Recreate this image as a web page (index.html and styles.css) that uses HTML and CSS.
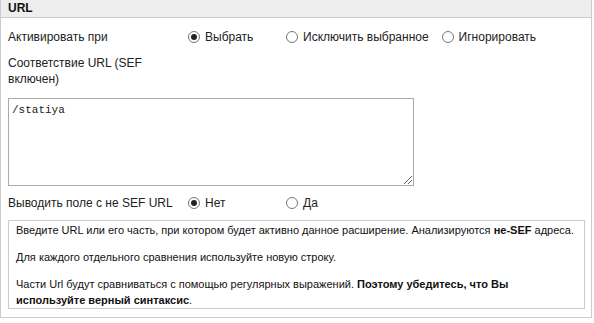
FILE: index.html
```html
<!DOCTYPE html>
<html lang="ru">
  <head>
    <meta charset="UTF-8">
    <title>URL</title>
    <link rel="stylesheet" href="styles.css">
  </head>
  <body>
    <fieldset class="panel">
      <h3 class="panel-title">URL</h3>
      <div class="panel-body">
        <div class="row">
          <span class="label">Активировать при</span>
          <div class="options">
            <label class="opt"><span class="radio checked"></span>Выбрать</label>
            <label class="opt"><span class="radio"></span>Исключить выбранное</label>
            <label class="opt"><span class="radio"></span>Игнорировать</label>
          </div>
        </div>
        <div class="row">
          <span class="label">Соответствие URL (SEF включен)</span>
        </div>
        <div class="area">/statiya<span class="grip"></span></div>
        <div class="row">
          <span class="label">Выводить поле с не SEF URL</span>
          <div class="options">
            <label class="opt"><span class="radio checked"></span>Нет</label>
            <label class="opt"><span class="radio"></span>Да</label>
          </div>
        </div>
        <div class="info">
          <p>Введите URL или его часть, при котором будет активно данное расширение. Анализируются <b>не-SEF</b> адреса.</p>
          <p>Для каждого отдельного сравнения используйте новую строку.</p>
          <p>Части Url будут сравниваться с помощью регулярных выражений. <b>Поэтому убедитесь, что Вы используйте верный синтаксис</b>.</p>
        </div>
      </div>
    </fieldset>
  </body>
</html>
```
FILE: styles.css
```css
html, body {
  margin: 0;
  background-color: white;
}
body {
  font-family: "Liberation Sans", Arial, sans-serif;
  font-size: 12px;
  color: #222;
}
.panel {
  margin: 0;
  padding: 0;
  width: 592px;
  height: 318px;
  box-sizing: border-box;
  border: 1px solid #ccc;
  border-top: none;
}
.panel-title {
  margin: 0;
  padding: 2px 7px;
  height: 13px;
  line-height: 13px;
  font-size: 12px;
  background-color: #eee;
  border-bottom: 1px solid #ccc;
  color: #111;
}
.panel-body {
  padding: 11px 6px 0 7px;
}
.row {
  display: flex;
  align-items: center;
  min-height: 16px;
}
.label {
  width: 172px;
  flex-shrink: 0;
  line-height: 16px;
}
.options {
  display: flex;
  margin-left: 8px;
}
.opt {
  display: inline-flex;
  align-items: center;
  min-width: 98px;
  margin-right: 13px;
}
.opt:first-child {
  margin-right: 0;
}
.radio {
  width: 12px;
  height: 12px;
  border: 1px solid #777;
  border-radius: 50%;
  margin-right: 5px;
  display: inline-block;
  box-sizing: border-box;
  position: relative;
  background: white;
}
.radio.checked::after {
  content: "";
  position: absolute;
  left: 2px;
  top: 2px;
  width: 6px;
  height: 6px;
  border-radius: 50%;
  background: #222;
}
.row + .row {
  margin-top: 10px;
}
.area {
  position: relative;
  margin-top: 11px;
  width: 406px;
  height: 88px;
  box-sizing: border-box;
  border: 1px solid #aaa;
  padding: 5px 3px;
  font-family: "Liberation Mono", "Courier New", monospace;
  font-size: 11px;
  line-height: 12px;
}
.grip {
  position: absolute;
  right: 1px;
  bottom: 1px;
  width: 8px;
  height: 8px;
  background: linear-gradient(135deg, transparent 45%, #666 45%, #666 55%, transparent 55%, transparent 70%, #666 70%, #666 80%, transparent 80%);
}
.area + .row {
  margin-top: 9px;
}
.info {
  margin-top: 9px;
  width: 577px;
  box-sizing: border-box;
  border: 1px solid #ccc;
  padding: 1px 6px 0 7px;
  font-size: 11px;
  line-height: 16px;
  color: #111;
}
.info p {
  margin: 0 0 11px;
}
.info p:last-child {
  margin-bottom: 0;
}
```
